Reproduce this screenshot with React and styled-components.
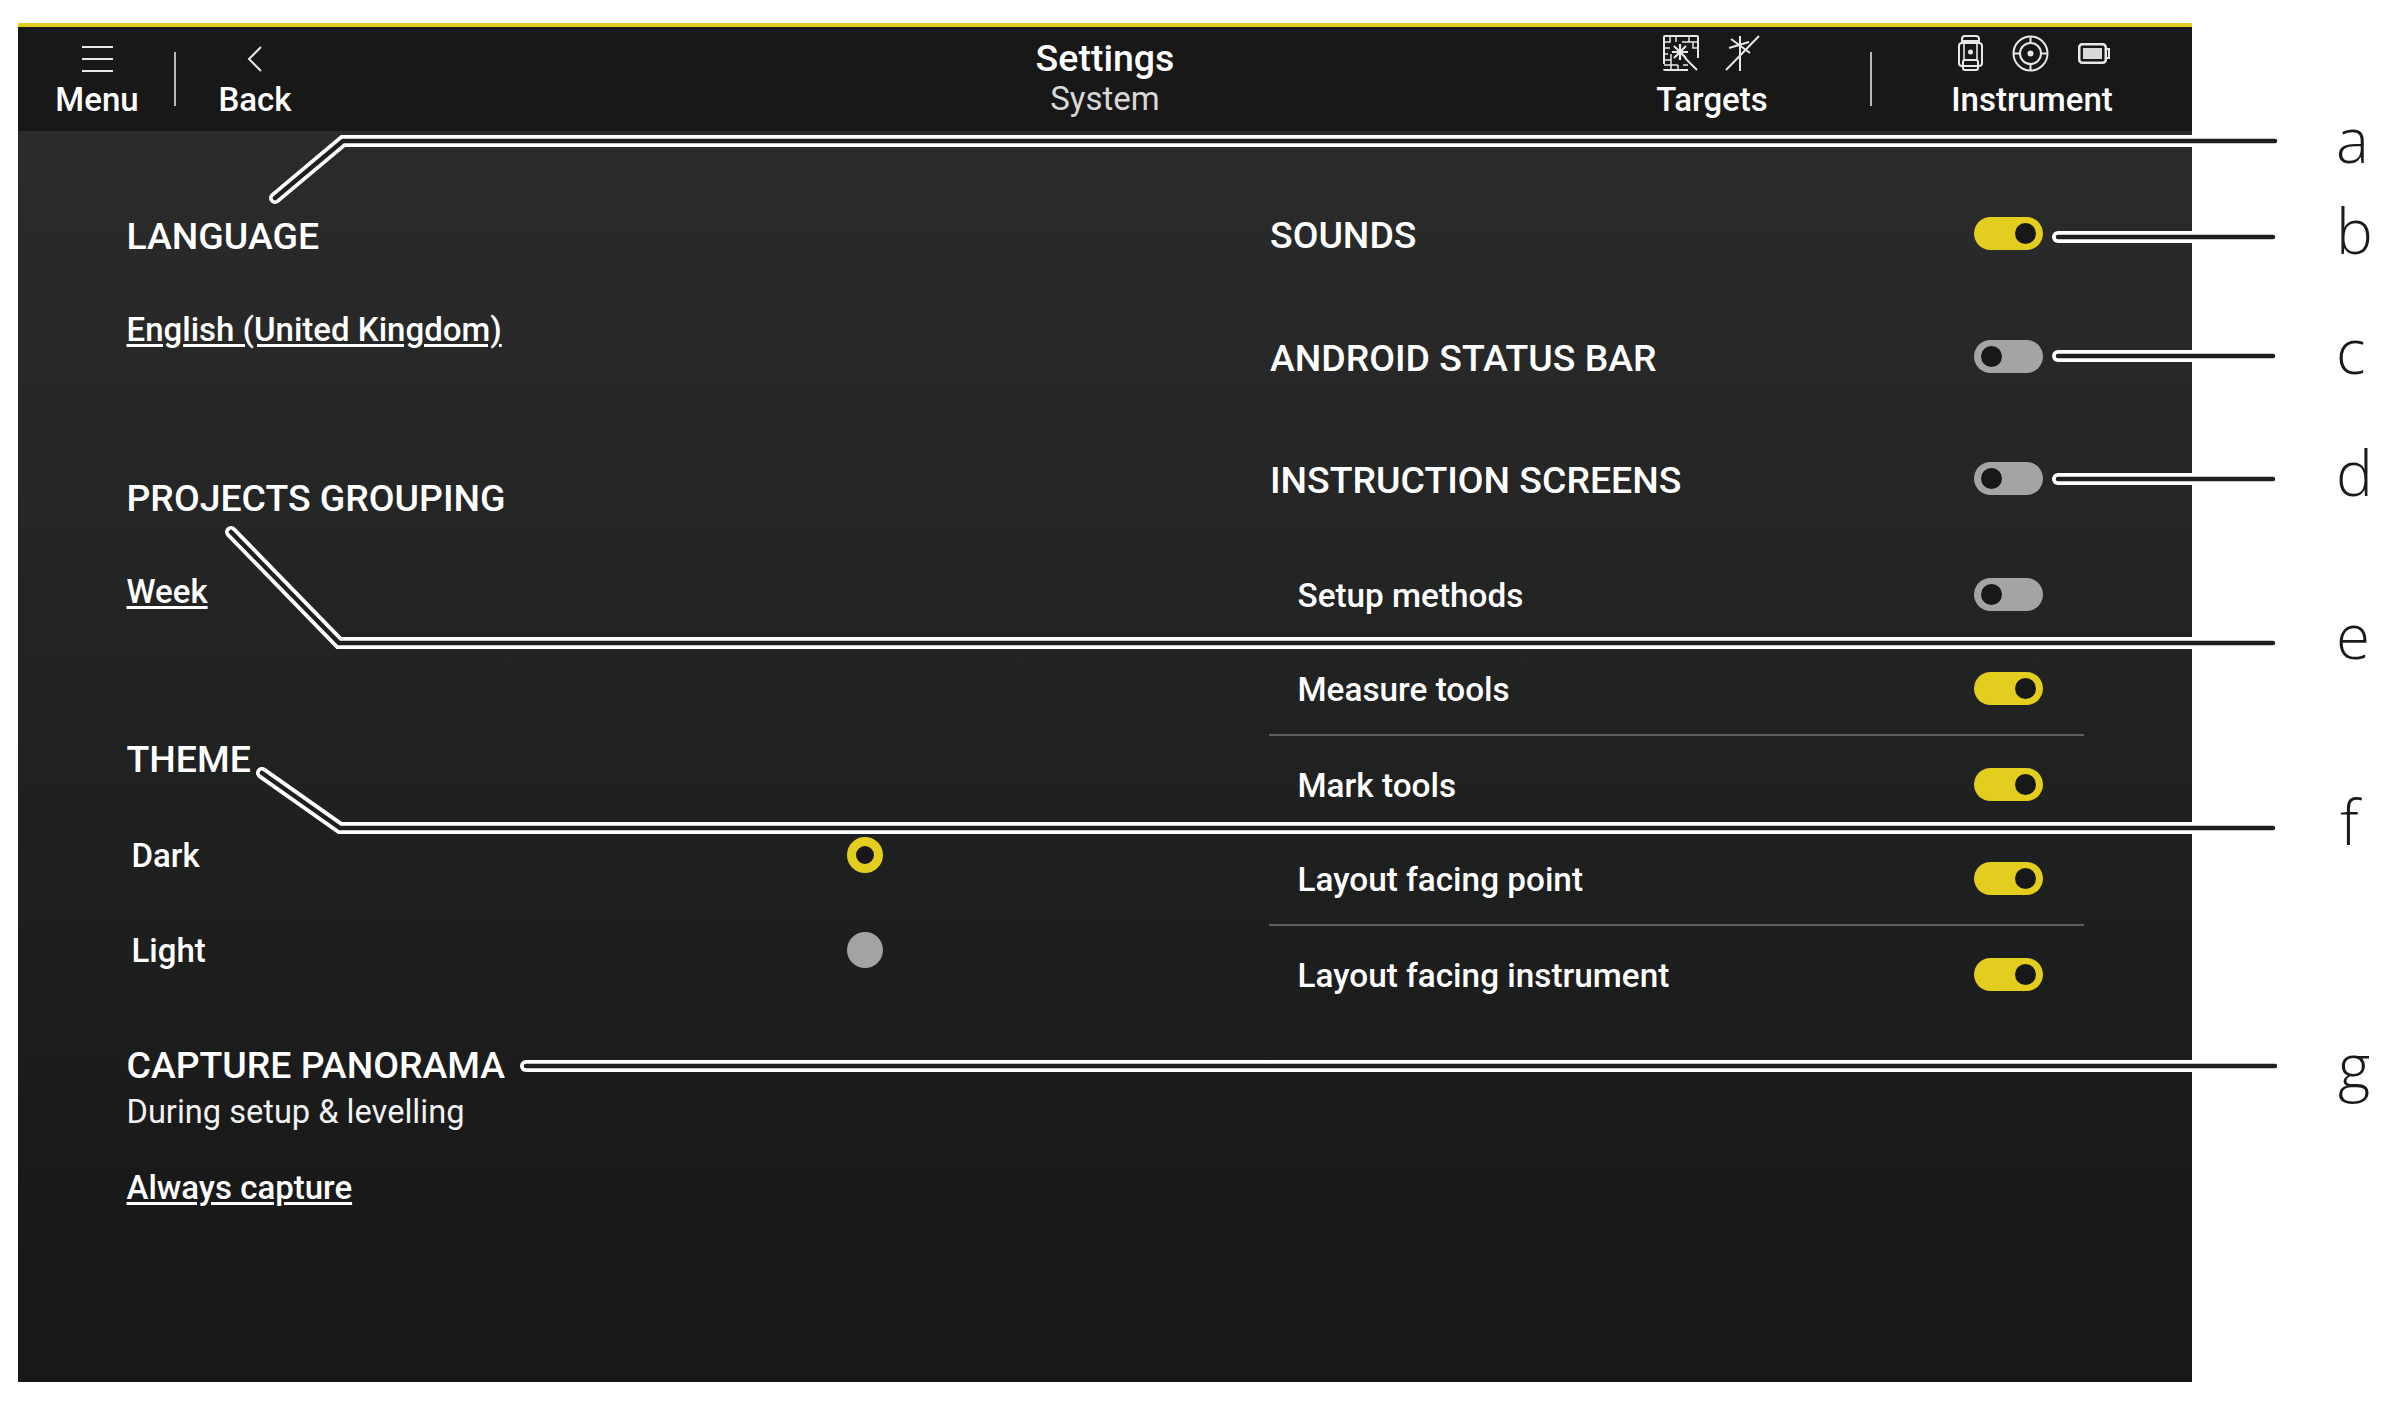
import React from "react";
import styled, { createGlobalStyle } from "styled-components";

const Global = createGlobalStyle`
  html, body { margin: 0; padding: 0; background: #fff; }
  body { font-family: Roboto, "Liberation Sans", sans-serif; }
`;

const Page = styled.div`
  position: relative;
  width: 2391px;
  height: 1413px;
  padding: 23px 0 0 18px;
  box-sizing: border-box;
  overflow: hidden;
`;

const Screen = styled.div`
  width: 2174px;
  height: 1359px;
  display: flex;
  flex-direction: column;
  color: #fff;
  background: #181818;
`;

const Header = styled.header`
  height: 104px;
  flex: none;
  display: grid;
  grid-template-columns: 1fr auto 1fr;
  background: #181818;
  border-top: 4px solid #e3cd1f;
  box-sizing: content-box;
`;

const ToolGroup = styled.div`
  display: flex;
  justify-content: ${(p) => (p.$end ? "flex-end" : "flex-start")};
`;

const Tool = styled.div`
  position: relative;
  width: ${(p) => p.$w}px;
  display: flex;
  flex-direction: column;
  align-items: center;
  justify-content: flex-end;
  padding-bottom: 11px;
  box-sizing: border-box;
  font-size: 33px;
  font-weight: 500;
  line-height: 40px;
  &::after {
    content: "";
    display: ${(p) => (p.$divider ? "block" : "none")};
    position: absolute;
    right: 0;
    top: 25px;
    width: 2px;
    height: 54px;
    background: #b9b9b9;
  }
`;

const IconRow = styled.div`
  display: flex;
  align-items: ${(p) => p.$align || "center"};
  justify-content: center;
  gap: ${(p) => p.$gap || 0}px;
  height: 38px;
  margin-bottom: 8px;
  margin-left: ${(p) => p.$shift || 0}px;
`;

const TitleBlock = styled.div`
  display: flex;
  flex-direction: column;
  align-items: center;
  padding-top: 10px;
`;

const Title = styled.div`
  font-size: 37.5px;
  font-weight: 500;
  line-height: 42px;
`;

const Subtitle = styled.div`
  font-size: 33px;
  line-height: 40px;
  color: #d8d8d8;
`;

const Body = styled.main`
  flex: 1;
  display: grid;
  grid-template-columns: 1252px 1fr;
  background: linear-gradient(180deg, #2b2b2b 0%, #1f2120 55%, #181818 90%);
`;

const LeftColumn = styled.section`
  padding: 83px 0 0 108.5px;
  display: flex;
  flex-direction: column;
`;

const RightColumn = styled.section`
  padding: 43px 0 0 0;
  display: flex;
  flex-direction: column;
`;

const Heading = styled.h2`
  margin: 0;
  font-size: 37.4px;
  font-weight: 500;
  line-height: 44px;
`;

const Link = styled.a`
  display: block;
  margin-top: ${(p) => p.$top}px;
  font-size: 33px;
  font-weight: 500;
  line-height: 40px;
  text-decoration: underline;
  text-underline-offset: 3px;
  color: #fff;
`;

const Group = styled.div`
  margin-bottom: ${(p) => p.$bottom || 0}px;
`;

const Note = styled.div`
  font-size: 32.6px;
  line-height: 40px;
  margin-top: 5px;
  color: #f2f2f2;
`;

const RadioList = styled.div`
  margin-top: 27px;
`;

const RadioRow = styled.div`
  display: flex;
  align-items: center;
  justify-content: space-between;
  width: 756px;
  height: 95px;
  padding-left: 5px;
  box-sizing: border-box;
  font-size: 33px;
  font-weight: 500;
`;

const Radio = styled.span`
  width: 36px;
  height: 36px;
  border-radius: 50%;
  box-sizing: border-box;
  margin-bottom: 2px;
  background: ${(p) => (p.$on ? "#181818" : "#a3a3a3")};
  border: ${(p) => (p.$on ? "9px solid #e3cd1f" : "none")};
`;

const SettingRow = styled.div`
  display: flex;
  align-items: center;
  justify-content: space-between;
  width: 773px;
  height: 122.5px;
`;

const SubList = styled.div`
  width: 815px;
  margin: 4px 0 0 -1px;
`;

const SubRow = styled.div`
  display: flex;
  align-items: center;
  justify-content: space-between;
  height: ${(p) => (p.$rule ? 90 : 100)}px;
  padding: 0 41px 0 28.5px;
  box-sizing: border-box;
  font-size: 33.3px;
  font-weight: 500;
  border-bottom: ${(p) => (p.$rule ? "2px solid #5f5f5f" : "none")};
`;

const Track = styled.span`
  display: flex;
  align-items: center;
  justify-content: ${(p) => (p.$on ? "flex-end" : "flex-start")};
  width: 69px;
  height: 33px;
  margin-bottom: 3px;
  padding: 0 7px;
  box-sizing: border-box;
  border-radius: 17px;
  background: ${(p) => (p.$on ? "#e3cd1f" : "#a3a5a4")};
`;

const Knob = styled.span`
  width: 21px;
  height: 21px;
  border-radius: 50%;
  background: #181818;
`;

const Callouts = styled.svg`
  position: absolute;
  left: 0;
  top: 0;
  pointer-events: none;
`;

const Legend = styled.span`
  position: absolute;
  left: ${(p) => p.$x}px;
  top: ${(p) => p.$y}px;
  font-family: "Open Sans", "Noto Sans", sans-serif;
  font-weight: 300;
  font-size: 62px;
  line-height: 70px;
  color: #1a1a1a;
`;

const Toggle = ({ on }) => (
  <Track $on={on}>
    <Knob />
  </Track>
);

const Ico = ({ w, h, children }) => (
  <svg width={w} height={h} viewBox={`0 0 ${w} ${h}`} fill="none" stroke="#e8e8e8" strokeWidth="2">
    {children}
  </svg>
);

const lines = [
  "M275 198 L343 141 L2275 141",
  "M2058 237 L2273 237",
  "M2058 356 L2273 356",
  "M2058 479 L2273 479",
  "M231 532 L339 643 L2273 643",
  "M262 773 L340 828 L2273 828",
  "M526 1066 L2275 1066",
];

const legends = [
  ["a", 2336, 104], ["b", 2336, 195], ["c", 2336, 315], ["d", 2336, 437],
  ["e", 2336, 600], ["f", 2340, 786], ["g", 2338, 1030],
];

export default function App() {
  return (
    <Page>
      <Global />
      <Screen>
        <Header>
          <ToolGroup>
            <Tool $w={158} $divider>
              <IconRow $align="flex-end">
                <Ico w={31} h={26}>
                  <path d="M0 1H31M0 13H31M0 25H31" />
                </Ico>
              </IconRow>
              Menu
            </Tool>
            <Tool $w={158}>
              <IconRow $align="flex-end">
                <Ico w={16} h={26}>
                  <path d="M14 1L2 13L14 25" />
                </Ico>
              </IconRow>
              Back
            </Tool>
          </ToolGroup>
          <TitleBlock>
            <Title>Settings</Title>
            <Subtitle>System</Subtitle>
          </TitleBlock>
          <ToolGroup $end>
            <Tool $w={320} $divider>
              <IconRow $gap={26} $shift={-2}>
                <Ico w={36} h={36}>
                  <path d="M1 29V2a1 1 0 0 1 1-1H34a1 1 0 0 1 1 1V23M1 34a1 1 0 0 0 1 1H25M22 23L34 35" />
                  <path d="M1 7H7V1M13 1V7M19 7H26M26 1V7H35M30 7V13H35M1 13H7M1 19H5M1 25H8V19M8 25V35M1 30H15M15 30V35M20 30H25" strokeWidth="1.5" />
                  <path d="M17 9V25M9 17H25M11 11L23 23M23 11L11 23" strokeWidth="2.2" />
                </Ico>
                <Ico w={35} h={36}>
                  <path d="M1 35L34 1M15 1V36" />
                  <path d="M6 4L25 18M4 13L24 7" />
                </Ico>
              </IconRow>
              Targets
            </Tool>
            <Tool $w={320}>
              <IconRow $gap={29} $shift={4}>
                <Ico w={25} h={36}>
                  <path d="M4 8V4a3 3 0 0 1 3-3H18a3 3 0 0 1 3 3V8M4 6H21" />
                  <rect x="1" y="8" width="23" height="23" rx="3" />
                  <path d="M6 8V25M19 8V25" strokeWidth="1.6" />
                  <rect x="5" y="25" width="15" height="10" rx="2" />
                  <circle cx="12.5" cy="17" r="2.5" fill="#e8e8e8" stroke="none" />
                </Ico>
                <Ico w={37} h={37}>
                  <circle cx="18.5" cy="18.5" r="17" />
                  <circle cx="18.5" cy="18.5" r="10.5" />
                  <circle cx="18.5" cy="18.5" r="3" fill="#e8e8e8" stroke="none" />
                  <path d="M18.5 1V8M18.5 29V36M1 18.5H8M29 18.5H36" />
                </Ico>
                <Ico w={32} h={21}>
                  <rect x="1.25" y="1.25" width="26.5" height="18.5" rx="3" strokeWidth="2.5" />
                  <rect x="5" y="5" width="19" height="11" fill="#d8d8d8" stroke="none" />
                  <path d="M28 6H31V15H28" />
                </Ico>
              </IconRow>
              Instrument
            </Tool>
          </ToolGroup>
        </Header>
        <Body>
          <LeftColumn>
            <Group $bottom={126}>
              <Heading>LANGUAGE</Heading>
              <Link $top={52}>English (United Kingdom)</Link>
            </Group>
            <Group $bottom={125}>
              <Heading>PROJECTS GROUPING</Heading>
              <Link $top={52}>Week</Link>
            </Group>
            <Group $bottom={45}>
              <Heading>THEME</Heading>
              <RadioList>
                <RadioRow>
                  <span>Dark</span>
                  <Radio $on />
                </RadioRow>
                <RadioRow>
                  <span>Light</span>
                  <Radio />
                </RadioRow>
              </RadioList>
            </Group>
            <Group>
              <Heading>CAPTURE PANORAMA</Heading>
              <Note>During setup & levelling</Note>
              <Link $top={36}>Always capture</Link>
            </Group>
          </LeftColumn>
          <RightColumn>
            <SettingRow>
              <Heading>SOUNDS</Heading>
              <Toggle on />
            </SettingRow>
            <SettingRow>
              <Heading>ANDROID STATUS BAR</Heading>
              <Toggle />
            </SettingRow>
            <SettingRow>
              <Heading>INSTRUCTION SCREENS</Heading>
              <Toggle />
            </SettingRow>
            <SubList>
              <SubRow>
                Setup methods
                <Toggle />
              </SubRow>
              <SubRow $rule>
                Measure tools
                <Toggle on />
              </SubRow>
              <SubRow>
                Mark tools
                <Toggle on />
              </SubRow>
              <SubRow $rule>
                Layout facing point
                <Toggle on />
              </SubRow>
              <SubRow>
                Layout facing instrument
                <Toggle on />
              </SubRow>
            </SubList>
          </RightColumn>
        </Body>
      </Screen>
      <Callouts width="2391" height="1413" viewBox="0 0 2391 1413" fill="none" strokeLinecap="round" strokeLinejoin="miter">
        {lines.map((d) => (
          <g key={d}>
            <path d={d} stroke="#fff" strokeWidth="12" />
            <path d={d} stroke="#1f1f1f" strokeWidth="4.5" />
          </g>
        ))}
      </Callouts>
      {legends.map(([t, x, y]) => (
        <Legend key={t} $x={x} $y={y}>
          {t}
        </Legend>
      ))}
    </Page>
  );
}
